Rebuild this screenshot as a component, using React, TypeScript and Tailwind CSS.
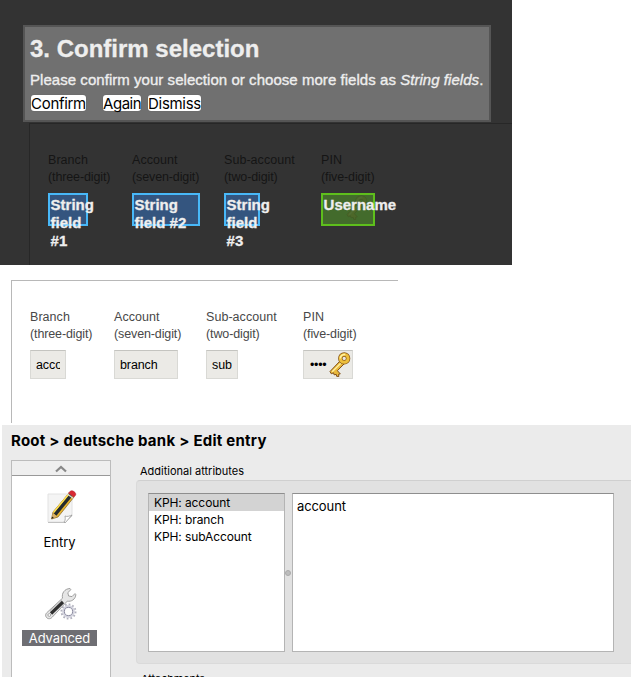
import React from "react";

const columns = [
  { label: "Branch", hint: "(three-digit)", col: "w-[84px]", box: "w-[36px]", mark: "w-[40px]", value: "account", tag: "String field #1" },
  { label: "Account", hint: "(seven-digit)", col: "w-[92px]", box: "w-[64px]", mark: "w-[68px]", value: "branch", tag: "String field #2" },
  { label: "Sub-account", hint: "(two-digit)", col: "w-[97px]", box: "w-[32px]", mark: "w-[36px]", value: "sub", tag: "String field #3" },
  { label: "PIN", hint: "(five-digit)", col: "w-[90px]", box: "w-[50px]", mark: "w-[54px]", value: "••••", tag: "Username" },
];

function KeyIcon({ className = "" }: { className?: string }) {
  return (
    <svg viewBox="0 0 22 26" className={className} fill="none">
      <path d="M11 10 1 20.5l1.3 2.3 2.2-1 .6 2 2.2-.4.3 1.9 2.2.2-.2-2.3 1.7-.3-2.9-3.2L15 13" fill="#e9b93c" stroke="#815018" strokeWidth="1" strokeLinejoin="round" />
      <path d="M12.5 11.5 3.2 20.8" stroke="#fff0a0" strokeWidth="1.4" />
      <circle cx="15.2" cy="7.4" r="3.9" stroke="#875719" strokeWidth="4.4" />
      <circle cx="15.2" cy="7.4" r="3.9" stroke="#edbf3c" strokeWidth="3" />
      <path d="M11.3 7.4a4 4 0 0 1 5-3.8" stroke="#fff2a3" strokeWidth="1.5" />
    </svg>
  );
}

function PencilIcon() {
  return (
    <svg viewBox="0 0 32 34" className="h-[34px] w-[32px]" fill="none">
      <path d="M3 4h24v22l-7 6H3Z" fill="#f4f4f4" stroke="#e2e2e2" />
      <path d="M3 32.5h16l8-7" stroke="#c2c2c2" />
      <path d="M19 32c2-2 1-5 1-6 2 1 5 0 7-1l-7 8Z" fill="#fff" stroke="#999" strokeWidth=".8" />
      <path d="m6.5 29 1.5-7L24 3l5 4-16 20Z" fill="#e9b52d" stroke="#806026" strokeWidth=".7" />
      <path d="m10 24.5 16-19.5" stroke="#252b2e" strokeWidth="3.6" />
      <path d="m8.5 22.5 15-18" stroke="#ffe052" strokeWidth="1.5" />
      <path d="m6.5 29 1.4-5.8 4 3.3Z" fill="#d8b16d" />
      <path d="m6.5 29 .6-2.6 1.7 1.3Z" fill="#222" />
      <path d="m23.5 3 2-2c2-1 6 1.5 5.2 4l-1.8 2.2Z" fill="#d92832" stroke="#a92630" strokeWidth=".5" />
      <path d="m22.5 4 5.5 4.2" stroke="#d6d6c8" strokeWidth="1.4" />
    </svg>
  );
}

function ToolsIcon() {
  return (
    <svg viewBox="0 0 34 34" className="h-[34px] w-[34px]" fill="none">
      <path d="M18.5 12.2c-1-5 2-9.4 7.5-9.7l1 1-3.2 3.2.8 3.3 3.4.6 3-3 .8 1c0 4.5-4.7 7.5-8.5 6.5L8.2 31.2c-3.5 4-9-.8-5.4-4.5Z" fill="#e6e6e6" stroke="#959595" strokeWidth=".9" />
      <path d="m19 16-12 11.5" stroke="#303030" strokeWidth="3.2" />
      <path d="m18 14-12 11" stroke="#bbb" strokeWidth="1" />
      <circle cx="5.3" cy="29" r="1.4" fill="#fff" stroke="#888" strokeWidth=".7" />
      <circle cx="24.5" cy="25.5" r="7" stroke="#b0b0bc" strokeWidth="2" strokeDasharray="1.7 1.96" />
      <circle cx="24.5" cy="25.5" r="5.2" fill="#fff" stroke="#d5d5df" strokeWidth="2.4" />
      <circle cx="24.5" cy="25.5" r="4.1" fill="#fff" stroke="#8b8ba0" strokeWidth="1" />
    </svg>
  );
}

function ColumnLabel({ label, hint }: { label: string; hint: string }) {
  return (
    <div className="whitespace-nowrap text-[12.5px] leading-[17px]">
      <div className="tracking-[0.05px]">{label}</div>
      <div className="tracking-[-0.12px]">{hint}</div>
    </div>
  );
}

function Selection() {
  return (
    <section className="h-[265px] w-[512px] overflow-hidden bg-[#333] pt-[25px] font-['Helvetica_Neue','Liberation_Sans',sans-serif]">
      <div className="ml-[23px] h-[97px] w-[468px] border-2 border-[#555] bg-[#707070] pl-[5px] text-[#eee]">
        <h1 className="h-[43px] whitespace-nowrap pt-[8px] text-[24px] font-bold leading-[28px] [-webkit-text-stroke:0.3px_#eee]">3. Confirm selection</h1>
        <p className="h-[25px] whitespace-nowrap text-[15px] leading-[20px] tracking-[0.045px] [-webkit-text-stroke:0.35px_#eee]">
          Please confirm your selection or choose more fields as <em>String fields</em>.
        </p>
        <div className="flex h-[16px] font-[Inter,sans-serif] text-[15px] leading-[17px] tracking-[-0.3px] text-black">
          <button className="ml-px h-[16px] w-[55px] whitespace-nowrap rounded-[3px] bg-white shadow-[0_0_1px_#555]">Confirm</button>
          <button className="ml-[17px] h-[16px] w-[38px] whitespace-nowrap rounded-[3px] bg-white tracking-[-0.45px] shadow-[0_0_1px_#555]">Again</button>
          <button className="ml-[7px] h-[16px] w-[53px] whitespace-nowrap rounded-[3px] bg-white shadow-[0_0_1px_#555]">Dismiss</button>
        </div>
      </div>
      <div className="ml-[29px] mt-px flex h-[142px] border-l border-t border-[#272727] pl-[18px] pt-[28px] text-[#151515]">
        {columns.map((c, i) => (
          <div key={c.label} className={`${c.col} shrink-0`}>
            <ColumnLabel label={c.label} hint={c.hint} />
            <div className={`relative mt-[7px] h-[33px] border-2 ${c.mark} ${i === 3 ? "border-[#5ebf1c] bg-[#436b2c]" : "border-[#48b8f8] bg-[#34557f]"}`}>
              {i === 3 && <KeyIcon className="absolute -top-px left-[23px] h-[26px] w-[22px] opacity-20 brightness-50" />}
              <div className="relative pl-[0.6px] pt-px text-[15px] font-bold leading-[18px] text-[#eee] [-webkit-text-stroke:0.3px_#eee]">{c.tag}</div>
            </div>
          </div>
        ))}
      </div>
    </section>
  );
}

function BankForm() {
  return (
    <section className="ml-[11px] mt-[15px] flex h-[143px] w-[387px] border-l border-t border-[#b8b8b8] pl-[18px] pt-[28px] font-['Helvetica_Neue','Liberation_Sans',sans-serif] text-[#484848]">
      {columns.map((c, i) => (
        <div key={c.label} className={`${c.col} shrink-0`}>
          <ColumnLabel label={c.label} hint={c.hint} />
          <div className={`mt-[7px] flex h-[29px] items-center border border-[#d9d9d5] border-t-[#c4c4c0] bg-[#ebeae6] px-[5px] text-[12.5px] text-black ${c.box}`}>
            <span className={`shrink-0 grow basis-0 overflow-hidden whitespace-nowrap pt-px ${i === 3 ? "pl-px tracking-[-0.3px]" : "tracking-[-0.1px]"}`}>{c.value}</span>
            {i === 3 && <KeyIcon className="-mr-[4px] mb-[2px] h-[26px] w-[22px] shrink-0" />}
          </div>
        </div>
      ))}
    </section>
  );
}

function EntryEditor() {
  return (
    <section className="ml-[2px] mt-[2px] h-[252px] w-[629px] overflow-hidden bg-[#ebebeb] font-[Inter,sans-serif] text-black">
      <h2 className="h-[35px] whitespace-nowrap pl-[9px] pt-[6px] text-[15px] font-bold leading-[20px] tracking-[0.25px]">Root &gt; deutsche bank &gt; Edit entry</h2>
      <div className="flex">
        <nav className="ml-[9px] h-[217px] w-[100px] border border-b-0 border-[#bcbcbc] bg-white text-[13px]">
          <div className="flex h-[15px] items-center justify-center border-b border-[#999] bg-[#efefef]">
            <svg viewBox="0 0 12 8" className="mt-px h-[8px] w-[12px]"><path d="m1 6.5 5-4.5 5 4.5" fill="none" stroke="#888" strokeWidth="2.2" /></svg>
          </div>
          <div className="flex flex-col items-center pt-[14px]">
            <PencilIcon />
            <div className="mr-[3px] mt-[10px] w-[75px] text-center leading-[16px]">Entry</div>
          </div>
          <div className="flex flex-col items-center pt-[36px]">
            <ToolsIcon />
            <div className="mr-[3px] mt-[10px] w-[75px] bg-[#6e6e73] text-center leading-[16px] tracking-[-0.1px] text-white">Advanced</div>
          </div>
        </nav>
        <main className="ml-[25px] w-[495px]">
          <div className="h-[20px] pl-[4px] pt-[3px] text-[11px] leading-[16px]">Additional attributes</div>
          <div className="flex h-[184px] rounded-l-[4px] border border-r-0 border-[#dadada] border-t-[#cfcfcf] bg-[#e1e1e1] pl-[11px] pt-[12px] text-[13px]">
            <ul className="h-[159px] w-[137px] border border-[#b4b4b4] border-t-[#8e8e8e] bg-white text-[12px] leading-[18px] tracking-[-0.1px]">
              <li className="h-[17px] bg-[#d3d3d3] pl-[5px]">KPH: account</li>
              <li className="h-[17px] pl-[5px]">KPH: branch</li>
              <li className="h-[17px] pl-[5px]">KPH: subAccount</li>
            </ul>
            <div className="flex h-[159px] w-[7px] items-center justify-center"><span className="h-[6px] w-[6px] shrink-0 -translate-x-px rounded-full border border-[#aaa] bg-[#bdbdbd]" /></div>
            <div className="h-[159px] w-[322px] border border-[#b4b4b4] border-t-[#8e8e8e] bg-white pl-[4px] pt-[4px] leading-[16px] tracking-[-0.1px]">account</div>
          </div>
          <div className="h-[13px] overflow-hidden pl-[5px] pt-[7px] text-[11px] leading-[16px] tracking-[-0.1px]">Attachments</div>
        </main>
      </div>
    </section>
  );
}

export default function App() {
  return (
    <div className="h-[679px] w-[633px] overflow-hidden bg-white">
      <Selection />
      <BankForm />
      <EntryEditor />
    </div>
  );
}
